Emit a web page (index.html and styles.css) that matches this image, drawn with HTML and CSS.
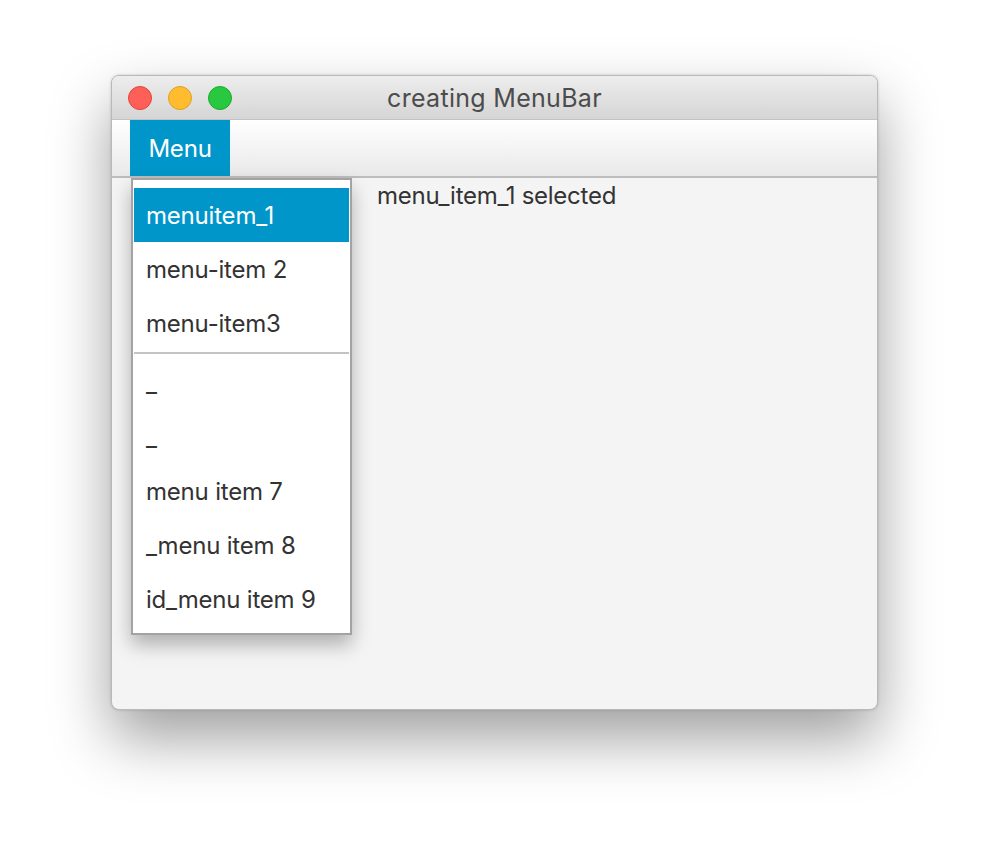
FILE: index.html
```html
<!DOCTYPE html>
<html>
<head>
<meta charset="utf-8">
<link rel="stylesheet" href="styles.css">
</head>
<body>
<div class="window">
  <div class="titlebar">
    <div class="lights">
      <span class="light red"></span>
      <span class="light yellow"></span>
      <span class="light green"></span>
    </div>
    <div class="title">creating MenuBar</div>
  </div>
  <div class="menubar">
    <div class="menu">Menu</div>
  </div>
  <div class="content">
    <div class="label">menu_item_1 selected</div>
  </div>
  <div class="popup">
    <div class="item selected">menuitem_1</div>
    <div class="item">menu-item 2</div>
    <div class="item">menu-item3</div>
    <div class="sep"></div>
    <div class="item">_</div>
    <div class="item">_</div>
    <div class="item">menu item 7</div>
    <div class="item">_menu item 8</div>
    <div class="item">id_menu item 9</div>
  </div>
</div>
</body>
</html>
```
FILE: styles.css
```css
html, body {
  margin: 0;
  padding: 0;
  background: #ffffff;
}
body {
  height: 858px;
  box-sizing: border-box;
  padding: 75px 0 0 111px;
  font-family: Inter, "Noto Sans", sans-serif;
}
.window {
  position: relative;
  width: 767px;
  height: 635px;
  box-sizing: border-box;
  border: 1px solid #b9b9b9;
  border-radius: 8px;
  background: #f4f4f4;
  box-shadow: 0 28px 60px rgba(0,0,0,0.38), 0 0 3px rgba(0,0,0,0.18);
  display: flex;
  flex-direction: column;
}
.titlebar {
  height: 43px;
  border-bottom: 1px solid #c3c3c3;
  border-radius: 7px 7px 0 0;
  background: linear-gradient(#ededed, #d5d5d5);
  display: flex;
  align-items: center;
  position: relative;
}
.lights {
  display: flex;
  gap: 16px;
  padding-left: 16px;
}
.light {
  width: 24px;
  height: 24px;
  border-radius: 50%;
  box-sizing: border-box;
}
.red { background: #fe5f57; border: 1px solid #e0443e; }
.yellow { background: #febc2e; border: 1px solid #dea123; }
.green { background: #28c840; border: 1px solid #1aab29; }
.title {
  position: absolute;
  left: 0;
  right: 0;
  top: 0;
  bottom: 0;
  display: flex;
  align-items: center;
  justify-content: center;
  font-size: 25px;
  color: #4c4c4c;
  letter-spacing: 0.3px;
}
.menubar {
  height: 56px;
  border-bottom: 2px solid #bdbdbd;
  background: linear-gradient(#ffffff, #e9e9e9);
  display: flex;
  padding-left: 18px;
}
.menu {
  width: 100px;
  background: #0096c9;
  color: #ffffff;
  font-size: 24px;
  display: flex;
  align-items: center;
  justify-content: center;
  letter-spacing: -0.2px;
}
.content {
  flex: 1;
  padding: 3px 0 0 265px;
  border-radius: 0 0 7px 7px;
}
.label {
  font-size: 24px;
  line-height: 29px;
  color: #333333;
  letter-spacing: -0.25px;
}
.popup {
  position: absolute;
  left: 19px;
  top: 102px;
  width: 221px;
  box-sizing: border-box;
  border: 2px solid #a3a3a3;
  background: #ffffff;
  padding: 8px 1px 7px 1px;
  box-shadow: 0 10px 18px rgba(0,0,0,0.28);
}
.item {
  height: 54px;
  display: flex;
  align-items: center;
  padding-left: 12px;
  font-size: 24px;
  color: #333333;
  letter-spacing: -0.2px;
}
.item.selected {
  background: #0096c9;
  color: #ffffff;
}
.sep {
  height: 2px;
  margin: 2px 0 2px 0;
  background: #c4c4c4;
}
```
